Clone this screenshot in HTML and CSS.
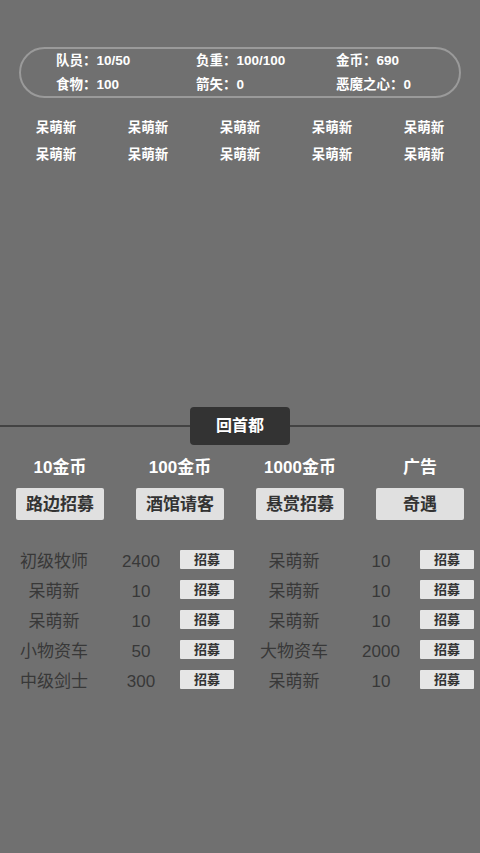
FILE: index.html
```html
<!DOCTYPE html>
<html lang="zh">
<head>
<meta charset="utf-8">
<link rel="stylesheet" href="styles.css">
</head>
<body>
<div class="page">
  <div class="top">
    <div class="stats">
      <div>队员：10/50</div>
      <div>负重：100/100</div>
      <div>金币：690</div>
      <div>食物：100</div>
      <div>箭矢：0</div>
      <div>恶魔之心：0</div>
    </div>
    <div class="team">
      <div>呆萌新</div><div>呆萌新</div><div>呆萌新</div><div>呆萌新</div><div>呆萌新</div>
      <div>呆萌新</div><div>呆萌新</div><div>呆萌新</div><div>呆萌新</div><div>呆萌新</div>
    </div>
  </div>
  <div class="bar">
    <div class="line"></div>
    <div class="home">回首都</div>
    <div class="line"></div>
  </div>
  <div class="shops">
    <div class="shop"><div class="price">10金币</div><div class="sbtn">路边招募</div></div>
    <div class="shop"><div class="price">100金币</div><div class="sbtn">酒馆请客</div></div>
    <div class="shop"><div class="price">1000金币</div><div class="sbtn">悬赏招募</div></div>
    <div class="shop"><div class="price">广告</div><div class="sbtn">奇遇</div></div>
  </div>
  <div class="list">
    <div class="row"><span class="name">初级牧师</span><span class="num">2400</span><span class="rbtn">招募</span></div>
    <div class="row"><span class="name">呆萌新</span><span class="num">10</span><span class="rbtn">招募</span></div>
    <div class="row"><span class="name">呆萌新</span><span class="num">10</span><span class="rbtn">招募</span></div>
    <div class="row"><span class="name">呆萌新</span><span class="num">10</span><span class="rbtn">招募</span></div>
    <div class="row"><span class="name">呆萌新</span><span class="num">10</span><span class="rbtn">招募</span></div>
    <div class="row"><span class="name">呆萌新</span><span class="num">10</span><span class="rbtn">招募</span></div>
    <div class="row"><span class="name">小物资车</span><span class="num">50</span><span class="rbtn">招募</span></div>
    <div class="row"><span class="name">大物资车</span><span class="num">2000</span><span class="rbtn">招募</span></div>
    <div class="row"><span class="name">中级剑士</span><span class="num">300</span><span class="rbtn">招募</span></div>
    <div class="row"><span class="name">呆萌新</span><span class="num">10</span><span class="rbtn">招募</span></div>
  </div>
</div>
</body>
</html>
```
FILE: styles.css
```css
html, body {
  margin: 0;
  padding: 0;
  background: #707070;
}
body {
  font-family: "Liberation Sans", "Noto Sans CJK SC", sans-serif;
  width: 480px;
  height: 853px;
  overflow: hidden;
}
.page {
  width: 480px;
}
.top {
  height: 407px;
  padding-top: 47px;
  box-sizing: border-box;
}
.stats {
  margin: 0 19px;
  height: 51px;
  box-sizing: border-box;
  border: 2px solid #9a9a9a;
  border-radius: 26px;
  display: grid;
  grid-template-columns: 140px 140px 140px;
  grid-template-rows: 24px 24px;
  align-content: center;
  padding-left: 35px;
  color: #fff;
  font-size: 13.5px;
  font-weight: 700;
  line-height: 24px;
  white-space: nowrap;
}
.team {
  margin: 16px 10px 0;
  display: grid;
  grid-template-columns: repeat(5, 92px);
  grid-auto-rows: 27px;
  color: #fff;
  font-size: 13.5px;
  font-weight: 700;
  line-height: 27px;
  text-align: center;
}
.bar {
  display: flex;
  align-items: center;
  height: 38px;
}
.line {
  flex: 1;
  height: 2px;
  background: #434343;
}
.home {
  width: 100px;
  height: 38px;
  background: #333333;
  border-radius: 4px;
  color: #fff;
  font-size: 16px;
  font-weight: 700;
  line-height: 38px;
  text-align: center;
}
.shops {
  display: grid;
  grid-template-columns: repeat(4, 120px);
  margin-top: 12px;
}
.shop {
  display: flex;
  flex-direction: column;
  align-items: center;
}
.price {
  color: #fff;
  font-size: 17px;
  font-weight: 700;
  line-height: 22px;
}
.sbtn {
  margin-top: 9px;
  width: 88px;
  height: 32px;
  background: #e0e0e0;
  border-radius: 2px;
  color: #333;
  font-size: 17px;
  font-weight: 700;
  line-height: 33px;
  text-align: center;
}
.list {
  margin-top: 25px;
  display: grid;
  grid-template-columns: 240px 240px;
  grid-auto-rows: 30px;
}
.row {
  display: flex;
  align-items: flex-start;
  color: #383838;
  font-size: 17px;
}
.name {
  display: block;
  width: 108px;
  padding-top: 1.5px;
  line-height: 30px;
  text-align: center;
  white-space: nowrap;
}
.num {
  display: block;
  width: 66px;
  padding-top: 1.5px;
  line-height: 30px;
  text-align: center;
  font-size: 17px;
}
.rbtn {
  margin-left: 6px;
  margin-top: 5px;
  width: 54px;
  height: 19px;
  background: #e6e6e6;
  border-radius: 1px;
  color: #333;
  font-size: 13px;
  font-weight: 700;
  line-height: 19px;
  text-align: center;
}
```
